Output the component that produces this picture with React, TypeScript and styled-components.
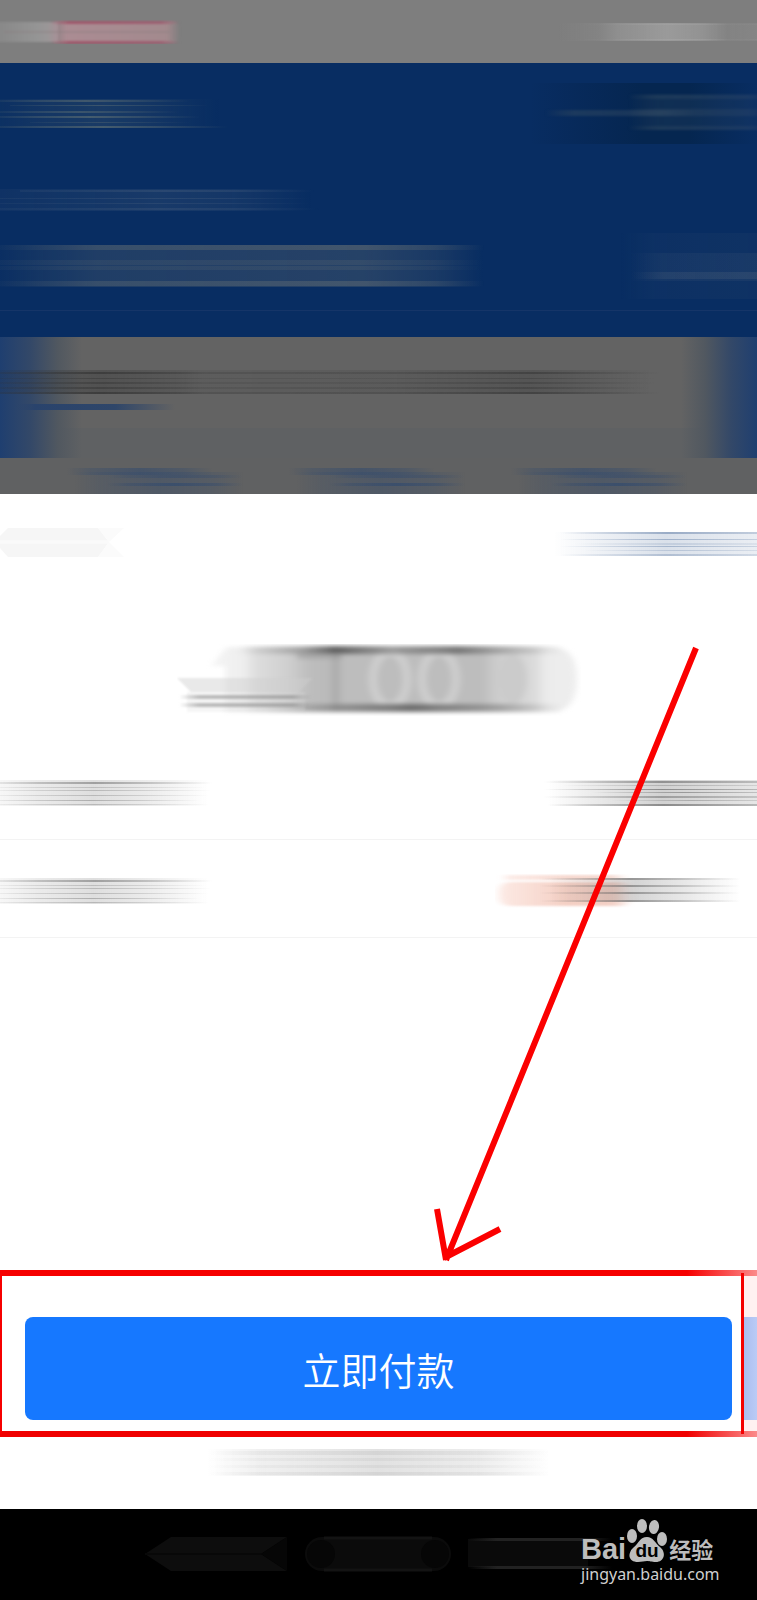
import React, { useId } from "react";
import styled, { createGlobalStyle } from "styled-components";

const GlobalStyle = createGlobalStyle`
  *, *::before, *::after { box-sizing: border-box; }
  body {
    margin: 0;
    background: #fff;
    font-family: "Noto Sans CJK SC", "Noto Sans", sans-serif;
  }
`;

const Page = styled.div`
  display: flex;
  flex-direction: column;
  min-height: 100vh;
  overflow-x: hidden;
`;

const StatusBar = styled.header`
  display: flex;
  justify-content: space-between;
  padding: 20px 0 19px;
  background: #7e7e7e;
`;

const Header = styled.section`
  display: flex;
  flex-direction: column;
  padding: 17px 0 26px;
  background: #082d62;
`;

const HeaderRow = styled.div<{ $gap?: number }>`
  display: flex;
  justify-content: space-between;
  align-items: center;
  margin-bottom: ${(p) => p.$gap ?? 0}px;
`;

const HeaderRule = styled.div`
  height: 1px;
  background: #153568;
`;

const Promo = styled.section`
  display: flex;
  flex-direction: column;
  gap: 9px;
  padding: 32px 0 48px;
  background:
    linear-gradient(to right, #1f3f70 0, #334868 30px, #515860 58px, rgba(99, 99, 99, 0) 82px),
    linear-gradient(to left, #1f3f70 0, #334868 26px, #515860 52px, rgba(99, 99, 99, 0) 76px),
    linear-gradient(#636363 0 91px, #5f6163 91px);
`;

const TabMark = styled.div`
  width: 160px;
  height: 6px;
  margin-left: 15px;
  background: linear-gradient(to right, rgba(38, 64, 106, 0), #29436c 20px, #2f4669 100px, rgba(60, 75, 100, 0));
`;

const PromoLinks = styled.nav`
  display: flex;
  justify-content: center;
  gap: 42px;
  height: 36px;
  padding-top: 10px;
  background: #606162;
`;

const Sheet = styled.main`
  display: flex;
  flex: 1;
  flex-direction: column;
  position: relative;
  background: #fff;
`;

const SheetHead = styled.div`
  display: flex;
  justify-content: space-between;
  padding: 34px 0 0;
`;

const Amount = styled.div`
  display: flex;
  justify-content: center;
  padding: 86px 0 26px;
`;

const DetailRow = styled.div`
  display: flex;
  align-items: center;
  justify-content: space-between;
  height: 98px;
  padding-top: 6px;
  border-bottom: 1px solid #f3f3f3;
`;

const Space = styled.div`
  flex: 1;
  min-height: 332px;
`;

const PayArea = styled.section`
  display: flex;
  padding: 6px 0;
  background:
    linear-gradient(to right, #f60000 calc(100% - 70px), #fb8a8a) top / 100% 6px no-repeat,
    linear-gradient(to right, #f00000 calc(100% - 70px), #fb8a8a) bottom / 100% 6px no-repeat;
`;

const PayFrame = styled.div`
  flex: 1;
  margin: -3px 0;
  padding: 44px 9px 14px 23px;
  border-left: 2px solid #f60000;
  border-right: 3px solid #f40000;
`;

const PayButton = styled.button`
  display: block;
  width: 100%;
  height: 103px;
  padding: 0;
  border: 0;
  border-radius: 8px;
  background: #1678ff;
  color: #fff;
  font-family: inherit;
  font-size: 38px;
  font-weight: 350;
  line-height: 52px;
`;

const PayTail = styled.div`
  width: 13px;
  background:
    linear-gradient(to right, #aabdf0, #bacbf5) 0 41px / 13px 103px no-repeat,
    #fff1f1;
`;

const Note = styled.div`
  display: flex;
  justify-content: center;
  padding: 11px 0 31px;
`;

const NavBar = styled.footer`
  display: flex;
  position: relative;
  gap: 16px;
  height: 91px;
  padding: 27px 0 0 144px;
  background: #000;
`;

const Arrow = styled.svg`
  position: absolute;
  right: 50px;
  bottom: 248px;
  overflow: visible;
  pointer-events: none;
`;

const Watermark = styled.div`
  display: flex;
  position: absolute;
  right: 38px;
  bottom: 15px;
  flex-direction: column;
  width: 138px;
  color: #bdbdbd;
`;

const Brand = styled.div`
  display: flex;
  align-items: flex-end;
  height: 45px;
`;

const BrandText = styled.span`
  font: bold 29px/27px "Liberation Sans", sans-serif;
`;

const BrandSuffix = styled.span`
  margin-left: 1px;
  font: bold 22px/29px "Noto Sans CJK SC", sans-serif;
`;

const Address = styled.a`
  color: #d0d0d0;
  font: 16px/22px "Noto Sans", sans-serif;
  text-decoration: none;
`;

/* y, height, opacity, x start, x end */
type Line = [number, number, number, number, number];

interface SmearProps {
  width: number;
  height: number;
  color: string;
  lines: Line[];
  stops?: [number, number][];
}

const SmearSvg = styled.svg`
  display: block;
  flex: none;
`;

const BOTH: [number, number][] = [[0, 0], [15, 0.5], [50, 1], [80, 0.6], [100, 0]];
const TO_RIGHT: [number, number][] = [[0, 0.25], [18, 0.6], [45, 1], [70, 0.6], [100, 0]];
const TO_LEFT: [number, number][] = [[0, 0], [20, 0.4], [55, 1], [100, 0.55]];

function Smear({ width, height, color, lines, stops = BOTH }: SmearProps) {
  const id = useId();
  return (
    <SmearSvg width={width} height={height} viewBox={`0 0 ${width} ${height}`} aria-hidden="true">
      <defs>
        <linearGradient id={id}>
          {stops.map(([at, alpha]) => (
            <stop key={at} offset={`${at}%`} stopColor={color} stopOpacity={alpha} />
          ))}
        </linearGradient>
        <filter id={`${id}b`} filterUnits="userSpaceOnUse" x="-10" y="-4" width={width + 20} height={height + 8} colorInterpolationFilters="sRGB">
          <feGaussianBlur stdDeviation="0.01 0.6" />
        </filter>
      </defs>
      <g filter={`url(#${id}b)`}>
        {lines.map(([y, h, alpha, from, to], i) => (
          <rect key={i} x={from} y={y} width={to - from} height={h} opacity={alpha} fill={`url(#${id})`} />
        ))}
      </g>
    </SmearSvg>
  );
}

function SignalSmear() {
  return (
    <SmearSvg width="182" height="24" aria-hidden="true">
      <defs>
        <linearGradient id="sigGray">
          <stop offset="0" stopColor="#868686" />
          <stop offset="0.7" stopColor="#959595" />
          <stop offset="1" stopColor="#a0979a" />
        </linearGradient>
        <linearGradient id="sigPink">
          <stop offset="0" stopColor="#ad8a93" stopOpacity="0" />
          <stop offset="0.14" stopColor="#ab8c93" />
          <stop offset="0.9" stopColor="#a38a8e" />
          <stop offset="1" stopColor="#a38a8e" stopOpacity="0" />
        </linearGradient>
        <linearGradient id="sigEdge">
          <stop offset="0" stopColor="#a0586c" stopOpacity="0" />
          <stop offset="0.15" stopColor="#a0586c" />
          <stop offset="0.85" stopColor="#9d6072" />
          <stop offset="1" stopColor="#9d6072" stopOpacity="0" />
        </linearGradient>
        <filter id="sigBlur" x="-5%" y="-20%" width="110%" height="140%" colorInterpolationFilters="sRGB">
          <feGaussianBlur stdDeviation="1" />
        </filter>
      </defs>
      <g filter="url(#sigBlur)">
        <rect x="-8" y="2" width="66" height="20" fill="url(#sigGray)" />
        <rect x="48" y="1" width="132" height="22" rx="8" fill="url(#sigPink)" />
        <rect x="4" y="11" width="166" height="2" fill="#8a7c80" opacity="0.4" />
        <rect x="50" y="1" width="130" height="3" fill="url(#sigEdge)" />
        <rect x="50" y="21" width="130" height="3" fill="url(#sigEdge)" />
      </g>
    </SmearSvg>
  );
}

function AmountSmear() {
  return (
    <SmearSvg width="404" height="72" viewBox="0 0 404 72" aria-hidden="true">
      <defs>
        <linearGradient id="amtBody">
          <stop offset="0" stopColor="#f5f5f5" />
          <stop offset="0.09" stopColor="#eeeeee" />
          <stop offset="0.12" stopColor="#dedede" />
          <stop offset="0.21" stopColor="#cfcfcf" />
          <stop offset="0.27" stopColor="#bdbdbd" />
          <stop offset="0.325" stopColor="#bababa" />
          <stop offset="0.34" stopColor="#a8a8a8" />
          <stop offset="0.36" stopColor="#bdbdbd" />
          <stop offset="0.74" stopColor="#bdbdbd" />
          <stop offset="0.78" stopColor="#cccccc" />
          <stop offset="0.88" stopColor="#dadada" />
          <stop offset="0.92" stopColor="#ececec" />
          <stop offset="1" stopColor="#eeeeee" />
        </linearGradient>
        <linearGradient id="amtTop">
          <stop offset="0" stopColor="#777" stopOpacity="0" />
          <stop offset="0.2" stopColor="#777" stopOpacity="0.45" />
          <stop offset="0.3" stopColor="#555" stopOpacity="0.9" />
          <stop offset="0.48" stopColor="#888" stopOpacity="0.7" />
          <stop offset="0.68" stopColor="#6a6a6a" stopOpacity="0.85" />
          <stop offset="0.8" stopColor="#888" stopOpacity="0.6" />
          <stop offset="1" stopColor="#999" stopOpacity="0" />
        </linearGradient>
        <linearGradient id="amtBottom">
          <stop offset="0" stopColor="#888" stopOpacity="0" />
          <stop offset="0.25" stopColor="#777" stopOpacity="0.6" />
          <stop offset="0.5" stopColor="#666" stopOpacity="0.9" />
          <stop offset="0.8" stopColor="#888" stopOpacity="0.6" />
          <stop offset="1" stopColor="#999" stopOpacity="0" />
        </linearGradient>
        <linearGradient id="amtLine">
          <stop offset="0" stopColor="#a5a5a5" stopOpacity="0" />
          <stop offset="0.15" stopColor="#a5a5a5" stopOpacity="0.7" />
          <stop offset="0.85" stopColor="#999" stopOpacity="0.7" />
          <stop offset="1" stopColor="#a5a5a5" stopOpacity="0" />
        </linearGradient>
        <filter id="amtBlur" x="-5%" y="-40%" width="110%" height="180%" colorInterpolationFilters="sRGB">
          <feGaussianBlur stdDeviation="3 2" />
        </filter>
        <filter id="amtSoft" x="-5%" y="-20%" width="110%" height="140%" colorInterpolationFilters="sRGB">
          <feGaussianBlur stdDeviation="1" />
        </filter>
      </defs>
      <g filter="url(#amtBlur)">
        <path d="M50 3H378Q400 5 400 35T378 68H48V22H34Z" fill="url(#amtBody)" />
        <g fill="none" stroke="#cdcdcd" strokeWidth="9">
          <ellipse cx="213" cy="35" rx="17" ry="27" />
          <ellipse cx="262" cy="35" rx="17" ry="27" />
        </g>
        <ellipse cx="336" cy="35" rx="14" ry="25" fill="#cbcbcb" />
        <rect x="60" y="2" width="325" height="8" fill="url(#amtTop)" />
        <rect x="120" y="8" width="45" height="7" fill="#8a8a8a" opacity="0.35" />
        <rect x="85" y="60" width="300" height="8" fill="url(#amtBottom)" />
      </g>
      <g filter="url(#amtSoft)">
        <path d="M0 34H136L122 48H14Z" fill="#cfcfcf" opacity="0.45" />
        <rect x="10" y="48" width="118" height="20" fill="#dadada" opacity="0.25" />
        <rect x="2" y="51" width="134" height="4" fill="url(#amtLine)" />
        <rect x="2" y="59" width="134" height="4" fill="url(#amtLine)" />
      </g>
    </SmearSvg>
  );
}

function CouponSmear() {
  const dark = [4, 11, 18, 26];
  return (
    <SmearSvg width="262" height="36" viewBox="0 0 262 36" aria-hidden="true">
      <defs>
        <linearGradient id="coupon">
          <stop offset="0" stopColor="#f9d4c9" stopOpacity="0.5" />
          <stop offset="0.5" stopColor="#f3cabd" stopOpacity="0.9" />
          <stop offset="0.85" stopColor="#efc3b6" stopOpacity="0.8" />
          <stop offset="1" stopColor="#efc3b6" stopOpacity="0" />
        </linearGradient>
        <linearGradient id="couponLine">
          <stop offset="0" stopColor="#666" stopOpacity="0" />
          <stop offset="0.45" stopColor="#555" />
          <stop offset="0.7" stopColor="#777" stopOpacity="0.7" />
          <stop offset="1" stopColor="#888" stopOpacity="0" />
        </linearGradient>
        <filter id="couponBlur" colorInterpolationFilters="sRGB">
          <feGaussianBlur stdDeviation="4 1" />
        </filter>
        <filter id="couponSoft" y="-20%" height="140%" colorInterpolationFilters="sRGB">
          <feGaussianBlur stdDeviation="0.01 0.6" />
        </filter>
      </defs>
      <g filter="url(#couponBlur)">
        <rect x="10" y="1" width="123" height="5" fill="url(#coupon)" opacity="0.8" />
        <rect x="4" y="8" width="134" height="24" rx="10" fill="url(#coupon)" />
      </g>
      <g filter="url(#couponSoft)">
        <rect x="55" y="4" width="190" height="24" fill="url(#couponLine)" opacity="0.25" />
        {dark.map((y) => (
          <rect key={y} x="45" y={y} width="200" height="2" fill="url(#couponLine)" opacity="0.5" />
        ))}
      </g>
    </SmearSvg>
  );
}

function PawMark() {
  return (
    <svg width="42" height="45" viewBox="0 0 42 45" aria-hidden="true">
      <g fill="#bdbdbd">
        <ellipse cx="6" cy="18" rx="5" ry="7" />
        <ellipse cx="16" cy="8" rx="5" ry="7" />
        <ellipse cx="28" cy="9" rx="5" ry="7" transform="rotate(8 28 9)" />
        <ellipse cx="36" cy="21" rx="5" ry="7" />
        <path d="M21 19C27 19 29 25 34 29C41 35 38 44 30 44C25 44 24 43 21 43C18 43 16 44 12 44C2 44 1 35 8 29C13 25 14 19 21 19Z" />
      </g>
      <text x="21" y="39" textAnchor="middle" fontFamily="Liberation Sans, sans-serif" fontSize="19" fontWeight="700" fill="#000">du</text>
    </svg>
  );
}

const detailLabel: Line[] = [
  [0, 26, 0.25, 0, 208], [2, 2, 0.65, 0, 212], [7, 1, 0.35, 0, 206], [10, 1, 0.4, 0, 212],
  [15, 1, 0.4, 0, 210], [20, 1, 0.5, 0, 200], [24, 1, 0.4, 0, 210],
];

const linkLines: Line[] = [
  [0, 7, 0.5, 0, 145], [4, 22, 0.32, 8, 176], [7, 3, 0.4, 40, 176], [15, 3, 0.6, 40, 176],
];

export default function App() {
  return (
    <>
      <GlobalStyle />
      <Page>
        <StatusBar>
          <SignalSmear />
          <Smear
            width={199}
            height={24}
            color="#adadad"
            stops={[[0, 0], [20, 0.2], [30, 0.6], [55, 1], [72, 0.75], [85, 0.2], [100, 0.25]]}
            lines={[[3, 18, 0.6, 0, 199], [4, 1, 0.3, 20, 199], [19, 1, 0.4, 20, 199]]}
          />
        </StatusBar>

        <Header>
          <HeaderRow $gap={43}>
            <Smear
              width={240}
              height={34}
              color="#7b8578"
              stops={TO_RIGHT}
              lines={[[3, 29, 0.16, 0, 220], [4, 2, 0.4, 0, 190], [9, 1, 0.35, 10, 210], [15, 2, 0.35, 0, 180], [20, 2, 0.45, 0, 200], [26, 1, 0.25, 30, 190], [30, 2, 0.45, 0, 230]]}
            />
            <SmearSvg width="227" height="66" viewBox="0 0 227 66" aria-hidden="true">
              <defs>
                <linearGradient id="pillShade">
                  <stop offset="0" stopColor="#06244f" stopOpacity="0" />
                  <stop offset="0.5" stopColor="#052650" />
                  <stop offset="0.7" stopColor="#052650" />
                  <stop offset="1" stopColor="#082d62" />
                </linearGradient>
                <linearGradient id="pillLine">
                  <stop offset="0" stopColor="#445564" stopOpacity="0" />
                  <stop offset="0.2" stopColor="#344c62" stopOpacity="0.6" />
                  <stop offset="0.8" stopColor="#344c6a" stopOpacity="0.5" />
                  <stop offset="1" stopColor="#344c6a" stopOpacity="0" />
                </linearGradient>
                <filter id="pillBlur" y="-20%" height="140%" colorInterpolationFilters="sRGB">
                  <feGaussianBlur stdDeviation="1" />
                </filter>
              </defs>
              <rect y="3" width="227" height="61" fill="url(#pillShade)" />
              <g filter="url(#pillBlur)">
                <rect x="15" y="30" width="150" height="6" fill="url(#pillLine)" opacity="0.8" />
                <rect x="98" y="14" width="150" height="36" fill="url(#pillLine)" opacity="0.4" />
                <rect x="98" y="15" width="150" height="4" fill="url(#pillLine)" opacity="0.6" />
                <rect x="98" y="29" width="150" height="7" fill="url(#pillLine)" opacity="0.6" />
                <rect x="98" y="46" width="150" height="4" fill="url(#pillLine)" opacity="0.6" />
              </g>
            </SmearSvg>
          </HeaderRow>
          <HeaderRow $gap={22}>
            <Smear
              width={320}
              height={22}
              color="#5c6e86"
              stops={[[0, 0.4], [50, 0.9], [75, 0.7], [100, 0]]}
              lines={[[0, 22, 0.22, 0, 312], [1, 2, 0.3, 20, 315], [9, 1, 0.3, 0, 310], [14, 1, 0.25, 0, 310], [19, 2, 0.25, 0, 320]]}
            />
          </HeaderRow>
          <HeaderRow $gap={11}>
            <Smear
              width={484}
              height={44}
              color="#7c7f78"
              stops={[[0, 0.1], [8, 0.4], [20, 0.8], [75, 1], [90, 0.6], [100, 0]]}
              lines={[[1, 42, 0.26, 0, 484], [1, 5, 0.32, 0, 484], [16, 5, 0.16, -30, 484], [22, 4, 0.16, -30, 484], [37, 5, 0.32, 0, 484]]}
            />
            <Smear
              width={137}
              height={66}
              color="#56677d"
              stops={[[0, 0], [25, 0.7], [100, 0.9]]}
              lines={[[0, 66, 0.1, 0, 137], [20, 28, 0.16, 10, 137], [39, 7, 0.3, 12, 137]]}
            />
          </HeaderRow>
          <HeaderRule />
        </Header>

        <Promo>
          <Smear
            width={660}
            height={26}
            color="#303030"
            stops={[[0, 0.3], [15, 1], [27, 0.6], [31, 0.35], [60, 0.4], [81, 0.8], [100, 0]]}
            lines={[[1, 24, 0.34, 0, 650], [3, 2, 0.6, 0, 660], [9, 1, 0.4, 0, 655], [13, 2, 0.4, 0, 655], [18, 2, 0.45, 0, 650], [23, 2, 0.6, 0, 660]]}
          />
          <TabMark />
        </Promo>
        <PromoLinks>
          {[0, 1, 2].map((n) => (
            <Smear key={n} width={180} height={26} color="#2d486f" lines={linkLines} />
          ))}
        </PromoLinks>

        <Sheet>
          <SheetHead>
            <SmearSvg width="125" height="30" viewBox="0 0 125 30" aria-hidden="true">
              <path d="M8 0H98L109 14L98 29H8L0 20V8Z" fill="#f6f6f6" />
              <path d="M98 0H124L109 14Z M109 14L124 29H98Z" fill="#fbfbfb" />
              <path d="M0 14H108" stroke="#fff" strokeWidth="3" opacity="0.5" />
            </SmearSvg>
            <Smear
              width={203}
              height={30}
              color="#6480a8"
              stops={TO_LEFT}
              lines={[[4, 24, 0.24, 0, 203], [4, 2, 0.55, 6, 203], [11, 1, 0.5, 6, 203], [15, 2, 0.2, 20, 203], [18, 1, 0.45, 6, 203], [22, 1, 0.3, 30, 203], [26, 2, 0.35, 6, 203]]}
            />
          </SheetHead>
          <Amount>
            <AmountSmear />
          </Amount>
          <DetailRow>
            <Smear width={216} height={27} color="#7d7d7d" stops={TO_RIGHT} lines={detailLabel} />
            <Smear
              width={215}
              height={27}
              color="#5c5c5c"
              stops={TO_LEFT}
              lines={[[0, 26, 0.28, 6, 215], [1, 2, 0.55, 2, 215], [5, 1, 0.3, 20, 215], [9, 1, 0.6, 2, 215], [12, 1, 0.5, 50, 215], [16, 2, 0.45, 2, 215], [20, 1, 0.35, 70, 215], [24, 2, 0.6, 6, 215]]}
            />
          </DetailRow>
          <DetailRow>
            <Smear width={216} height={27} color="#7d7d7d" stops={TO_RIGHT} lines={detailLabel} />
            <CouponSmear />
          </DetailRow>
          <Space />
          <PayArea>
            <PayFrame>
              <PayButton type="button">立即付款</PayButton>
            </PayFrame>
            <PayTail />
          </PayArea>
          <Note>
            <Smear
              width={342}
              height={30}
              color="#bdbdbd"
              lines={[[1, 27, 0.45, 0, 340], [3, 4, 0.35, 0, 342], [10, 3, 0.25, 0, 340], [17, 3, 0.25, 0, 338], [24, 3, 0.35, 0, 342]]}
            />
          </Note>
          <Arrow width="272" height="618" viewBox="0 0 272 618" fill="none" stroke="#fb0000" strokeWidth="6" aria-hidden="true">
            <path d="M261 5L11 617M2 566L11 617M9 615L65 586" />
          </Arrow>
        </Sheet>

        <NavBar>
          <SmearSvg width="144" height="36" viewBox="0 0 144 36" aria-hidden="true">
            <path d="M1 18L27 1H143L117 18L143 35H27Z" fill="#0d0d0d" />
            <path d="M143 1L117 18L143 35Z" fill="#060606" />
            <path d="M1 18H117" stroke="#080808" strokeWidth="2" />
          </SmearSvg>
          <SmearSvg width="148" height="36" viewBox="0 0 148 36" aria-hidden="true">
            <rect x="1" y="1" width="146" height="34" rx="17" fill="#0b0b0b" />
            <path d="M20 2H128M20 34H128" stroke="#131313" strokeWidth="3" />
            <circle cx="17" cy="18" r="14" fill="#060606" />
            <circle cx="131" cy="18" r="14" fill="#060606" />
          </SmearSvg>
          <SmearSvg width="144" height="36" viewBox="0 0 144 36" aria-hidden="true">
            <defs>
              <linearGradient id="recentEdge">
                <stop offset="0" stopColor="#222" stopOpacity="0" />
                <stop offset="0.2" stopColor="#222" />
                <stop offset="0.8" stopColor="#222" />
                <stop offset="1" stopColor="#222" stopOpacity="0" />
              </linearGradient>
            </defs>
            <rect y="3" width="120" height="28" fill="#0a0a0a" />
            <rect y="2" width="144" height="3" fill="url(#recentEdge)" />
            <rect y="30" width="144" height="3" fill="url(#recentEdge)" />
          </SmearSvg>
          <Watermark>
            <Brand>
              <BrandText>Bai</BrandText>
              <PawMark />
              <BrandSuffix>经验</BrandSuffix>
            </Brand>
            <Address href="#">jingyan.baidu.com</Address>
          </Watermark>
        </NavBar>
      </Page>
    </>
  );
}
